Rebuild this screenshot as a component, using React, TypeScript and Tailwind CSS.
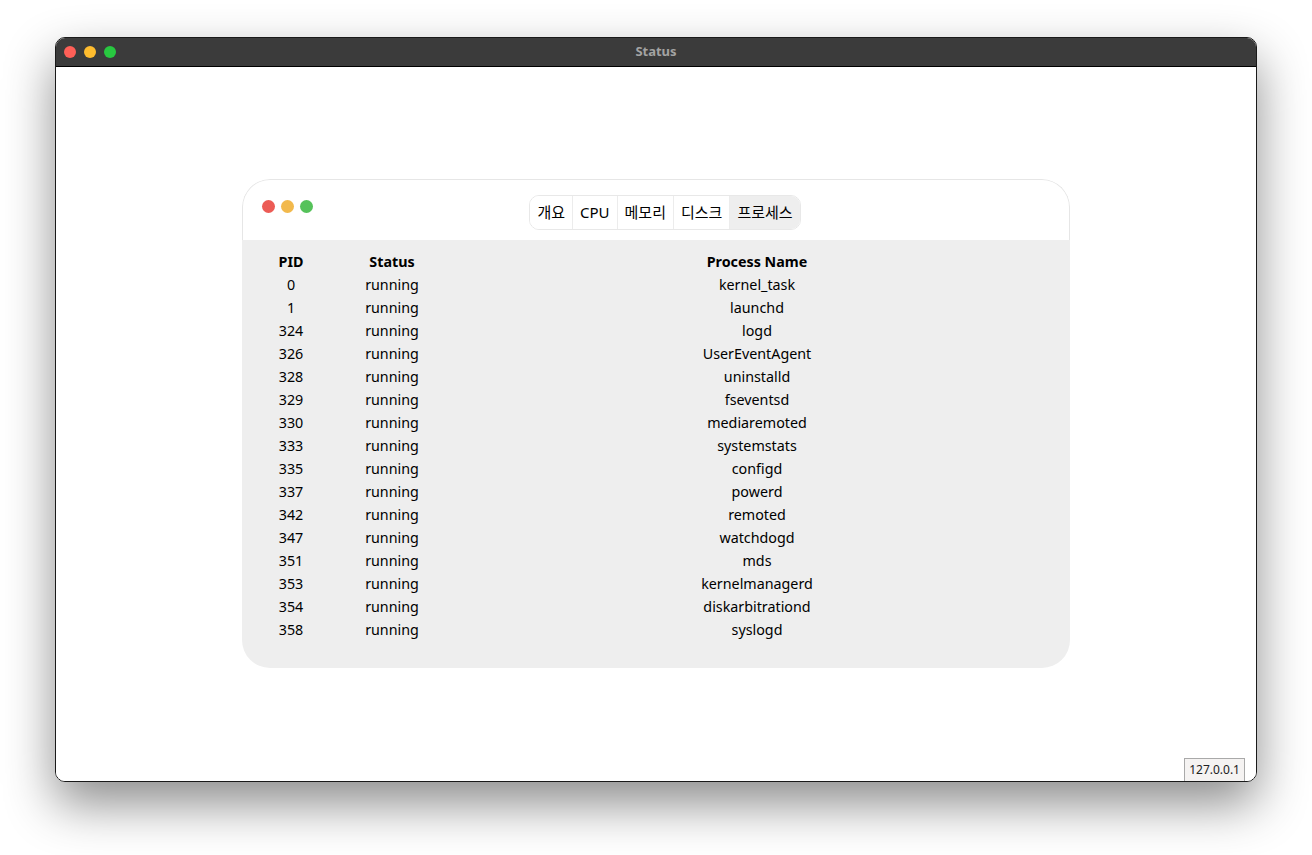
import React from "react";

const processes = [
  { pid: 0, status: "running", name: "kernel_task" },
  { pid: 1, status: "running", name: "launchd" },
  { pid: 324, status: "running", name: "logd" },
  { pid: 326, status: "running", name: "UserEventAgent" },
  { pid: 328, status: "running", name: "uninstalld" },
  { pid: 329, status: "running", name: "fseventsd" },
  { pid: 330, status: "running", name: "mediaremoted" },
  { pid: 333, status: "running", name: "systemstats" },
  { pid: 335, status: "running", name: "configd" },
  { pid: 337, status: "running", name: "powerd" },
  { pid: 342, status: "running", name: "remoted" },
  { pid: 347, status: "running", name: "watchdogd" },
  { pid: 351, status: "running", name: "mds" },
  { pid: 353, status: "running", name: "kernelmanagerd" },
  { pid: 354, status: "running", name: "diskarbitrationd" },
  { pid: 358, status: "running", name: "syslogd" },
];

const tabs = ["개요", "CPU", "메모리", "디스크", "프로세스"];

export default function App() {
  return (
    <div
      className="w-[1312px] h-[855px] bg-white pt-[37px] pl-[55px]"
      style={{ fontFamily: '"Noto Sans", "Noto Sans CJK KR", sans-serif' }}
    >
      <div className="w-[1202px] h-[745px] rounded-[10px] border border-[#1a1a1a] overflow-hidden flex flex-col shadow-[0_22px_50px_rgba(0,0,0,0.45)]">
        {/* title bar */}
        <div className="h-[29px] bg-[#3b3b3b] border-b border-black flex items-center relative shrink-0">
          <div className="flex items-center gap-[8px] pl-[8px]">
            <span className="w-[12px] h-[12px] rounded-full bg-[#fe5f57]" />
            <span className="w-[12px] h-[12px] rounded-full bg-[#febc2e]" />
            <span className="w-[12px] h-[12px] rounded-full bg-[#28c840]" />
          </div>
          <div className="absolute inset-0 flex items-center justify-center text-[13px] font-bold text-[#a3a3a3]">
            Status
          </div>
        </div>

        {/* body */}
        <div className="flex-1 bg-white relative">
          <div className="w-[828px] mx-auto mt-[112px] rounded-[28px] overflow-hidden">
            <div className="h-[61px] bg-white border border-b-0 border-[#e6e6e6] rounded-t-[28px] flex items-start pt-[15px] pl-[18px] relative">
              <div className="absolute left-[19px] top-[20px] flex items-center gap-[6px]">
                <span className="w-[13px] h-[13px] rounded-full bg-[#ec5b55]" />
                <span className="w-[13px] h-[13px] rounded-full bg-[#f2b94c]" />
                <span className="w-[13px] h-[13px] rounded-full bg-[#55c25a]" />
              </div>
              <div className="mx-auto flex border border-[#e8e8e8] rounded-[10px] overflow-hidden h-[35px] text-[15px] text-black">
                {tabs.map((t, i) => (
                  <div
                    key={t}
                    className={`px-[7px] flex items-center ${
                      i > 0 ? "border-l border-[#ececec]" : ""
                    } ${i === tabs.length - 1 ? "bg-[#eeeeee]" : "bg-white"}`}
                  >
                    {t}
                  </div>
                ))}
              </div>
            </div>
            <div className="bg-[#eeeeee] pt-[10px] pb-[27px] px-[13px]">
              <table className="w-[802px] text-[14.3px] text-black border-collapse">
                <thead>
                  <tr className="h-[23px]">
                    <th className="w-[72px] font-bold text-center">PID</th>
                    <th className="w-[130px] font-bold text-center">Status</th>
                    <th className="font-bold text-center">Process Name</th>
                  </tr>
                </thead>
                <tbody>
                  {processes.map((p) => (
                    <tr key={p.pid} className="h-[23px]">
                      <td className="text-center">{p.pid}</td>
                      <td className="text-center">{p.status}</td>
                      <td className="text-center">{p.name}</td>
                    </tr>
                  ))}
                </tbody>
              </table>
            </div>
          </div>

          <div className="absolute right-[11px] bottom-0 h-[23px] px-[4px] bg-[#f5f3f2] border border-b-0 border-[#a9a9a9] text-[12px] text-[#222] flex items-center">
            127.0.0.1
          </div>
        </div>
      </div>
    </div>
  );
}
